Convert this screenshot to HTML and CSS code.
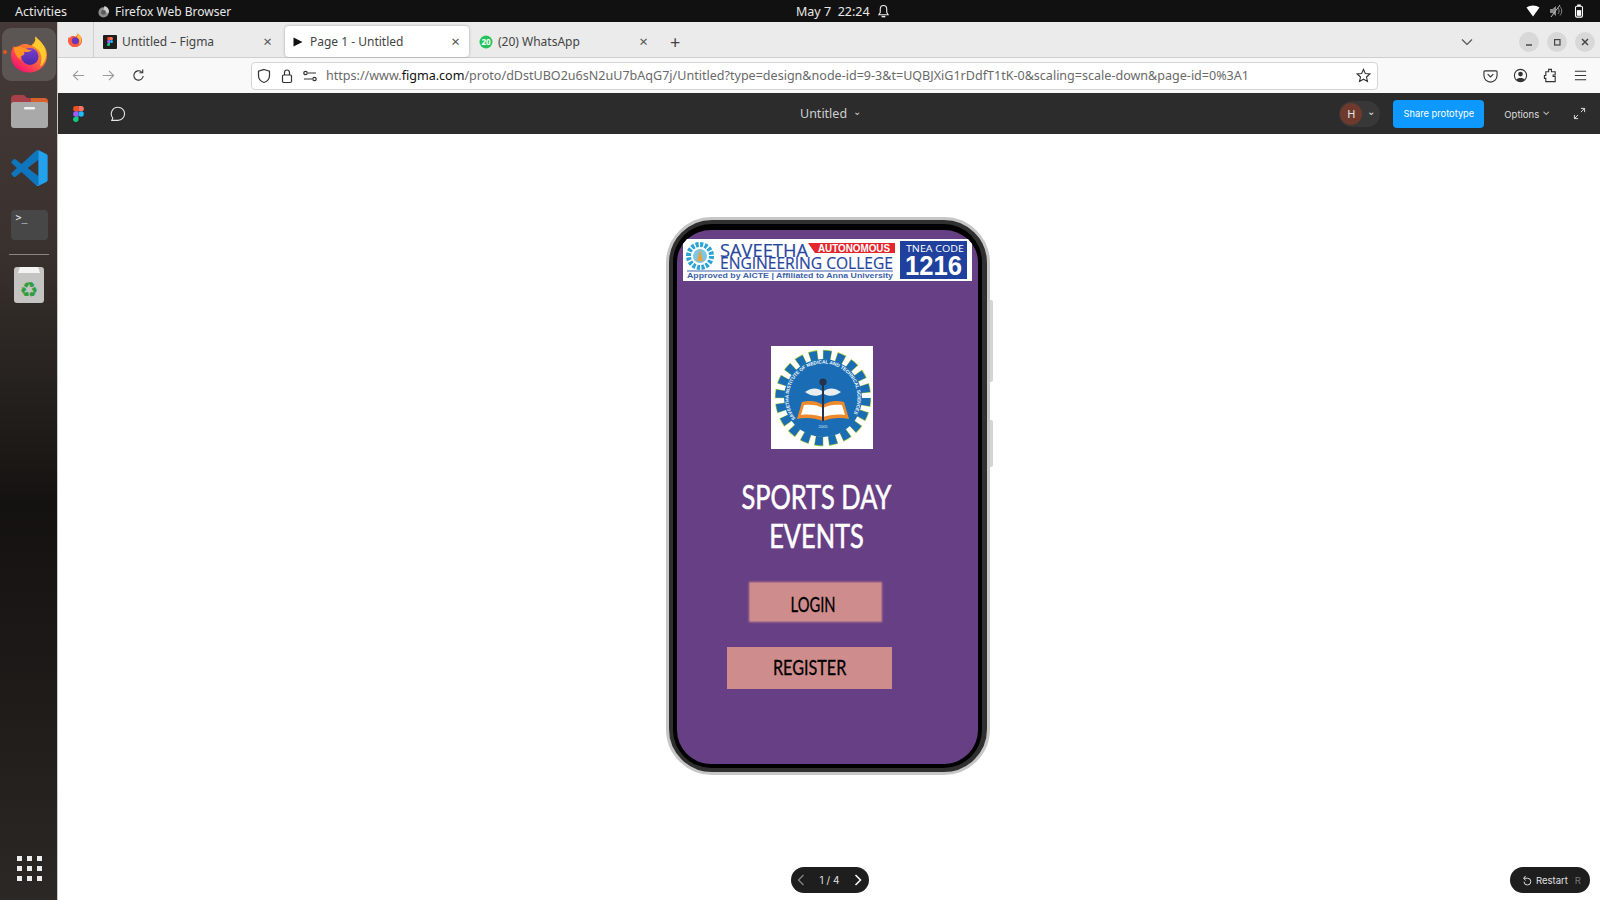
FILE: index.html
```html
<!DOCTYPE html>
<html lang="en">
<head>
    <meta charset="UTF-8">
    <title>Page 1 - Untitled</title>
    <link rel="stylesheet" href="styles.css">
</head>
<body>
    <!-- Ubuntu top bar -->
    <div class="topbar">
        <span class="activities">Activities</span>
        <svg class="app-icon" viewBox="0 0 14 14"><circle cx="7" cy="8" r="5.5" fill="#8d8d8d"/><path d="M8 1c3 1 5 3 5 6 0 1-1 2-2 2L7 5z" fill="#cfcfcf"/><circle cx="7" cy="8" r="2.6" fill="#5a5a5a"/></svg>
        <span class="app-name">Firefox Web Browser</span>
        <span class="clock">May 7&nbsp;&nbsp;22:24</span>
        <svg class="bell" viewBox="0 0 14 16"><path d="M7 1.5c-2.400 0-3.500 1.800-3.500 4v3.500L2 11.500h10L10.500 9V5.500c0-2.200-1.100-4-3.500-4z" fill="none" stroke="#eee" stroke-width="1.200"/><path d="M5 13.500h4" stroke="#eee" stroke-width="1.600"/></svg>
        <div class="tray">
            <svg viewBox="0 0 14 12"><path d="M0.500 2.500C4 -0.300 10 -0.300 13.500 2.500L7 11.500z" fill="#fff"/></svg>
            <svg viewBox="0 0 14 14"><path d="M1 5h2.500L7 2v10L3.500 9H1z" fill="#8a8a8a"/><path d="M9 4c1.500 2 1.500 4 0 6M11 2.500c2.300 3 2.300 6 0 9" fill="none" stroke="#8a8a8a"/><path d="M2 13L11 1" stroke="#bbb"/></svg>
            <svg viewBox="0 0 14 16"><rect x="3" y="2.500" width="8" height="12.500" rx="1.500" fill="none" stroke="#fff" stroke-width="1.200"/><rect x="5" y="0.500" width="4" height="2" fill="#fff"/><rect x="4.500" y="7" width="5" height="6.500" fill="#fff"/></svg>
        </div>
    </div>

    <div class="desktop">
        <!-- Dock -->
        <div class="dock">
            <div class="dock-active">
                <span class="running-dot"></span>
                <svg class="dock-firefox" viewBox="0 0 36 36">
                    <defs>
                        <linearGradient id="foxBody" x1="0.800" y1="0.100" x2="0.200" y2="0.900"><stop offset="0" stop-color="#ff9a2e"/><stop offset="0.500" stop-color="#ff6a3a"/><stop offset="1" stop-color="#f5156c"/></linearGradient>
                        <linearGradient id="foxCore" x1="0.500" y1="0" x2="0.500" y2="1"><stop offset="0" stop-color="#7a3fd0"/><stop offset="1" stop-color="#4a2aa5"/></linearGradient>
                    </defs>
                    <path d="M25 0c1 3 3 4 6 7 4 4 5 8 5 12 0 10-8 17-18 17S0 29 0 19c0-4 1-7 3-10 0 2 1 3 2 4 1-3 3-4 6-5 4-1 6 0 9 1 3-3 5-5 5-9z" fill="url(#foxBody)"/>
                    <circle cx="19" cy="20" r="8.500" fill="url(#foxCore)"/>
                    <path d="M3 11c3-2 8-1 11 1 2 1 5 2 7 1-2 3-6 3-8 2 1 2 0 4-2 4-2 1-2 3-1 5-4-3-7-8-7-13z" fill="#ff9420"/>
                    <path d="M24 0c5 4 11 9 11 18 0 6-3 10-6 12 2-5 2-10 0-14-1-3-5-5-8-7 3-2 4-5 3-9z" fill="#ffcb2e"/>
                </svg>
            </div>
            <svg class="dock-files" viewBox="0 0 37 34">
                <path d="M0 5a4 4 0 0 1 4-4h9l3 3h17a4 4 0 0 1 4 4v8H0z" fill="#a8404a"/>
                <path d="M20 4h13a4 4 0 0 1 4 4v4H20z" fill="#d7602c"/>
                <rect y="8" width="37" height="26" rx="3" fill="#a9a9a9"/>
                <rect x="13" y="13" width="11" height="2.500" rx="1" fill="#f2f2f2"/>
            </svg>
            <svg class="dock-code" viewBox="0 0 100 100">
                <path d="M96 11L75 1a6 6 0 0 0-7 1L28 39 11 26a4 4 0 0 0-5 0L1 31a4 4 0 0 0 0 6l14 13L1 63a4 4 0 0 0 0 6l5 5a4 4 0 0 0 5 0l17-13 40 37a6 6 0 0 0 7 1l21-10a6 6 0 0 0 4-6V17a6 6 0 0 0-4-6zM75 27L45 50l30 23z" fill="#0f75bd" fill-rule="evenodd"/>
                <path d="M75 1l21 10a6 6 0 0 1 4 6v66a6 6 0 0 1-4 6L75 99a6 6 0 0 1-7-1c3 2 7 0 7-3z" fill="#24a1ed"/>
            </svg>
            <div class="dock-terminal">&gt;_</div>
            <div class="dock-sep"></div>
            <svg class="dock-trash" viewBox="0 0 30 37">
                <rect y="1" width="30" height="36" rx="3" fill="#c4c4c2"/>
                <path d="M4 7l2-6h18l2 6z" fill="#f4f4f4"/>
                <text x="15" y="31" class="trash-mark">♻</text>
            </svg>
            <div class="dock-apps">
                <i></i><i></i><i></i><i></i><i></i><i></i><i></i><i></i><i></i>
            </div>
        </div>

        <div class="window">
            <!-- Tabs -->
            <div class="tabbar">
                <div class="view-btn">
                    <svg class="favicon" viewBox="0 0 36 36"><path d="M25 0c1 3 3 4 6 7 4 4 5 8 5 12 0 10-8 17-18 17S0 29 0 19c0-4 1-7 3-10 0 2 1 3 2 4 1-3 3-4 6-5 4-1 6 0 9 1 3-3 5-5 5-9z" fill="#ff5a3c"/><circle cx="19" cy="20" r="9" fill="#6a35c0"/><path d="M25 1c4 4 9 8 9 16 0 7-3 11-6 13 2-5 2-10 0-14-1-3-4-4-6-6 3-2 4-5 3-9z" fill="#ffc22e"/></svg>
                </div>
                <div class="tab">
                    <svg class="favicon" viewBox="0 0 14 14"><rect width="14" height="14" rx="1" fill="#1e1e1e"/><path d="M7 2H5.500a1.500 1.500 0 0 0 0 3H7z" fill="#f24e1e"/><path d="M7 2h1.500a1.500 1.500 0 0 1 0 3H7z" fill="#ff7262"/><path d="M7 5H5.500a1.500 1.500 0 0 0 0 3H7z" fill="#a259ff"/><circle cx="8.500" cy="6.500" r="1.500" fill="#1abcfe"/><path d="M7 8H5.500A1.500 1.500 0 1 0 7 9.500z" fill="#0acf83"/></svg>
                    <span class="tab-title">Untitled – Figma</span>
                    <span class="tab-close">×</span>
                </div>
                <div class="tab tab-active">
                    <svg class="favicon" viewBox="0 0 14 14"><path d="M2.500 2.500L11.500 7l-9 4.500z" fill="#111"/></svg>
                    <span class="tab-title">Page 1 - Untitled</span>
                    <span class="tab-close">×</span>
                </div>
                <div class="tab">
                    <svg class="favicon" viewBox="0 0 14 14"><circle cx="7" cy="7" r="6.500" fill="#25c45b"/><text x="7" y="9.500" class="wa-count">20</text></svg>
                    <span class="tab-title">(20) WhatsApp</span>
                    <span class="tab-close">×</span>
                </div>
                <span class="new-tab">+</span>
                <svg class="tabs-list" viewBox="0 0 12 8"><path d="M1 1.500l5 5 5-5" fill="none" stroke="#555" stroke-width="1.200"/></svg>
                <div class="win-btns">
                    <span class="win-btn"><svg viewBox="0 0 10 10"><path d="M2.500 7.500h5" stroke="#444" stroke-width="1.200"/></svg></span>
                    <span class="win-btn"><svg viewBox="0 0 10 10"><rect x="3" y="3" width="4.500" height="4.500" fill="none" stroke="#444"/></svg></span>
                    <span class="win-btn"><svg viewBox="0 0 10 10"><path d="M2.500 2.500l5 5M7.500 2.500l-5 5" stroke="#444" stroke-width="1.200"/></svg></span>
                </div>
            </div>

            <!-- Navigation -->
            <div class="navbar">
                <svg class="nav-icon nav-back" viewBox="0 0 16 16"><path d="M14 8H2.500M7.500 3l-5 5 5 5" class="line-dim"/></svg>
                <svg class="nav-icon nav-fwd" viewBox="0 0 16 16"><path d="M2 8h11.500M8.500 3l5 5-5 5" class="line-dim"/></svg>
                <svg class="nav-icon nav-reload" viewBox="0 0 16 16"><path d="M13 8.500a5 5 0 1 1-1.700-4.300M12.500 1.500v3.500H9" class="line-dark"/></svg>
                <div class="urlbar">
                    <svg class="url-icon" viewBox="0 0 16 16"><path d="M8 1.500l5.500 1.800v4.200c0 3.500-2.500 6-5.500 7-3-1-5.500-3.500-5.500-7V3.300z" class="line-dark"/></svg>
                    <svg class="url-icon" viewBox="0 0 16 16"><rect x="3.500" y="7" width="9" height="7.500" rx="1.200" class="line-dark"/><path d="M5.500 7V4.500a2.500 2.500 0 0 1 5 0V7" class="line-dark"/></svg>
                    <svg class="url-icon" viewBox="0 0 16 16"><path d="M6 5h8M2 11h8" class="line-dark"/><circle cx="3.500" cy="5" r="1.700" class="line-dark"/><circle cx="12.500" cy="11" r="1.700" class="line-dark"/></svg>
                    <span class="url-text">https://www.<b>figma.com</b>/proto/dDstUBO2u6sN2uU7bAqG7j/Untitled?type=design&amp;node-id=9-3&amp;t=UQBJXiG1rDdfT1tK-0&amp;scaling=scale-down&amp;page-id=0%3A1</span>
                    <svg class="url-star" viewBox="0 0 16 16"><path d="M8 1.500l2 4.400 4.700.5-3.500 3.200 1 4.700L8 11.900l-4.200 2.400 1-4.700-3.500-3.200 4.700-.5z" class="line-dark"/></svg>
                </div>
                <div class="nav-tools">
                    <svg class="nav-icon" viewBox="0 0 16 16"><path d="M2 3h12a1 1 0 0 1 1 1v4a7 7 0 0 1-14 0V4a1 1 0 0 1 1-1z" class="line-dark"/><path d="M5 6.500L8 9.500l3-3" class="line-dark"/></svg>
                    <svg class="nav-icon" viewBox="0 0 16 16"><circle cx="8" cy="8" r="6.500" class="line-dark"/><circle cx="8" cy="6.500" r="2.500" fill="#333"/><path d="M3.500 12.500c1-2.500 8-2.500 9 0-2 2.500-7 2.500-9 0z" fill="#333"/></svg>
                    <svg class="nav-icon" viewBox="0 0 16 16"><path d="M6 1.500h3v2.500h4v3.500h-2.200v1.500h2.200V14.500H3V11H1.500V8H3V4h3z" class="line-dark"/></svg>
                    <svg class="nav-icon" viewBox="0 0 16 16"><path d="M2 3.500h12M2 8h12M2 12.500h12" class="line-dark"/></svg>
                </div>
            </div>

            <!-- Figma toolbar -->
            <div class="figbar">
                <svg class="fig-logo" viewBox="0 0 12 18"><path d="M6 0H3a3 3 0 0 0 0 6h3z" fill="#f24e1e"/><path d="M6 0h3a3 3 0 0 1 0 6H6z" fill="#ff7262"/><path d="M6 6H3a3 3 0 0 0 0 6h3z" fill="#a259ff"/><circle cx="9" cy="9" r="3" fill="#1abcfe"/><path d="M6 12H3a3 3 0 1 0 3 3z" fill="#0acf83"/></svg>
                <svg class="fig-comment" viewBox="0 0 16 16"><path d="M8 1.200a6.600 6.600 0 0 1 0 13.200H1.800l1-2.400A6.600 6.600 0 0 1 8 1.200z" fill="none" stroke="#e6e6e6" stroke-width="1.100"/></svg>
                <div class="fig-title">Untitled<span class="fig-caret">⌄</span></div>
                <div class="fig-right">
                    <div class="fig-user"><span class="fig-avatar">H</span><span class="fig-caret">⌄</span></div>
                    <button class="share-btn">Share prototype</button>
                    <span class="fig-options">Options<span class="fig-caret">⌄</span></span>
                    <svg class="fig-expand" viewBox="0 0 14 14"><path d="M8.500 1.500h4v4M12.500 1.500L8.500 5.500M5.500 12.500h-4v-4M1.500 12.500l4-4" fill="none" stroke="#e6e6e6"/></svg>
                </div>
            </div>

            <!-- Prototype canvas -->
            <div class="stage">
                <div class="phone">
                    <span class="side-btn side-btn-top"></span>
                    <span class="side-btn side-btn-low"></span>
                    <div class="screen">
                        <svg class="banner" viewBox="0 0 289 42">
                            <rect width="289" height="42" fill="#fff"/>
                            <circle cx="17" cy="17" r="11.500" fill="#fff" stroke="#2aa3d5" stroke-width="5" stroke-dasharray="3 1.500"/>
                            <circle cx="17" cy="17" r="7" fill="#7cc7e6"/>
                            <path d="M14 22l3-12 3 12z" fill="#e8a13c"/>
                            <text x="37" y="17.500" class="b-name" textLength="88" lengthAdjust="spacingAndGlyphs">SAVEETHA</text>
                            <path d="M125 4h87v10h-80z" fill="#e5262d"/>
                            <text x="135" y="12.500" class="b-auto" textLength="72" lengthAdjust="spacingAndGlyphs">AUTONOMOUS</text>
                            <text x="37" y="30" class="b-college" textLength="173" lengthAdjust="spacingAndGlyphs">ENGINEERING COLLEGE</text>
                            <rect x="4" y="31.500" width="206" height="1" fill="#3f62b0"/>
                            <text x="4" y="39" class="b-small" textLength="206" lengthAdjust="spacingAndGlyphs">Approved by AICTE  |  Affiliated to Anna University</text>
                            <rect x="217" y="2" width="67" height="38" fill="#1f409c"/>
                            <text x="223" y="13" class="b-tnea" textLength="58" lengthAdjust="spacingAndGlyphs">TNEA CODE</text>
                            <text x="222" y="36" class="b-code" textLength="57" lengthAdjust="spacingAndGlyphs">1216</text>
                        </svg>
                        <svg class="seal" viewBox="0 0 102 103">
                            <rect width="102" height="103" fill="#fff"/>
                            <circle cx="52" cy="52" r="43" fill="none" stroke="#b5cf3c" stroke-width="10.500" stroke-dasharray="8.500 5.010" stroke-dashoffset="0.500"/>
                            <circle cx="52" cy="52" r="43" fill="none" stroke="#1a6db5" stroke-width="9" stroke-dasharray="7.500 6.010"/>
                            <circle cx="52" cy="52" r="39" fill="#1a6db5"/>
                            <path id="sealArc" d="M25 73.500A34.500 34.500 0 1 1 79 73.500" fill="none"/>
                            <text class="seal-text"><textPath href="#sealArc" startOffset="1">SAVEETHA INSTITUTE OF MEDICAL AND TECHNICAL SCIENCES</textPath></text>
                            <path d="M34 46c7-5 13-4 17-1v3c-5 3-12 2-17-2zM70 46c-7-5-13-4-17-1v3c5 3 12 2 17-2z" fill="#e9eef2"/>
                            <path d="M26 73l5-17c8-2 15-1 21 3 6-4 13-5 21-3l5 17c-9-2-18-1-26 2-8-3-17-4-26-2z" fill="#ee8a2c"/>
                            <path d="M30 69l3-10c7-1 14 0 19 3 5-3 12-4 19-3l3 10c-8-1-16 0-22 2-6-2-14-3-22-2z" fill="#fff"/>
                            <rect x="51" y="35" width="2" height="40" fill="#24324a"/>
                            <circle cx="52" cy="36" r="3.600" fill="#24324a"/>
                            <text x="52" y="82" class="seal-year">2005</text>
                        </svg>
                        <h1 class="title"><span class="squeeze">SPORTS DAY</span><br><span class="squeeze">EVENTS</span></h1>
                        <a class="cta cta-login"><span class="squeeze">LOGIN</span></a>
                        <a class="cta cta-register"><span class="squeeze">REGISTER</span></a>
                    </div>
                </div>

                <div class="pager">
                    <svg viewBox="0 0 10 14"><path d="M7.500 2L2.500 7l5 5" fill="none" stroke="#8a8a8a" stroke-width="1.200"/></svg>
                    <span>1 / 4</span>
                    <svg viewBox="0 0 10 14"><path d="M2.500 2l5 5-5 5" fill="none" stroke="#fff" stroke-width="1.500"/></svg>
                </div>
                <div class="restart">
                    <svg viewBox="0 0 12 14"><path d="M3 4.500h4a3.700 3.700 0 1 1-3.700 3.800M5 2L3 4.500 5 7" fill="none" stroke="#eee"/></svg>
                    <span>Restart</span>
                    <span class="restart-key">R</span>
                </div>
            </div>
        </div>
    </div>
</body>
</html>
```
FILE: styles.css
```css
* {
    box-sizing: border-box;
}

html, body {
    margin: 0;
    height: 100%;
    overflow: hidden;
}

body {
    font-family: "Noto Sans", sans-serif;
    background: #fff;
    color: #333;
    display: flex;
    flex-direction: column;
    width: 1600px;
    height: 900px;
}

/* top bar */
.topbar {
    height: 22px;
    background: #111;
    color: #e8e8e8;
    font-size: 12.5px;
    display: flex;
    align-items: center;
    position: relative;
    flex: none;
}

.activities {
    margin-left: 15px;
}

.app-icon {
    width: 13px;
    height: 13px;
    margin-left: 30px;
}

.app-name {
    margin-left: 5px;
    font-size: 12px;
}

.clock {
    position: absolute;
    left: 796px;
}

.bell {
    position: absolute;
    left: 877px;
    width: 13px;
    height: 15px;
}

.tray {
    margin-left: auto;
    margin-right: 14px;
    display: flex;
    align-items: center;
    gap: 9px;
}

.tray svg {
    width: 14px;
    height: 14px;
}

/* desktop */
.desktop {
    flex: 1;
    display: flex;
    min-height: 0;
}

.dock {
    width: 58px;
    flex: none;
    background: linear-gradient(to bottom, #453a38 0%, #3a322e 25%, #2a2522 38%, #141210 55%, #1d1a18 75%, #2c2825 100%);
    display: flex;
    flex-direction: column;
    align-items: center;
    padding: 6px 0 19px 1px;
    border-right: 1px solid #c8c8c8;
}

.dock-active {
    width: 54px;
    height: 53px;
    border-radius: 9px;
    background: #5b5553;
    display: flex;
    align-items: center;
    justify-content: center;
    position: relative;
}

.running-dot {
    position: absolute;
    left: 1px;
    top: 22px;
    width: 4px;
    height: 4px;
    border-radius: 50%;
    background: #e95420;
}

.dock-firefox {
    width: 36px;
    height: 37px;
}

.dock-files {
    width: 37px;
    height: 34px;
    margin-top: 13px;
}

.dock-code {
    width: 37px;
    height: 36px;
    margin-top: 22px;
}

.dock-terminal {
    width: 37px;
    height: 30px;
    margin-top: 24px;
    background: #474747;
    border-radius: 4px;
    color: #eee;
    font-family: "DejaVu Sans Mono", monospace;
    font-size: 10px;
    line-height: 15px;
    padding-left: 5px;
}

.dock-sep {
    width: 40px;
    height: 1px;
    background: #8b8682;
    margin-top: 14px;
}

.dock-trash {
    width: 30px;
    height: 37px;
    margin-top: 11px;
}

.trash-mark {
    font-family: "DejaVu Sans", sans-serif;
    font-size: 21px;
    fill: #2f9e41;
    text-anchor: middle;
}

.dock-apps {
    margin-top: auto;
    display: grid;
    grid-template-columns: repeat(3, 5px);
    gap: 5px;
}

.dock-apps i {
    width: 5px;
    height: 5px;
    background: #eee;
}

.window {
    flex: 1;
    display: flex;
    flex-direction: column;
    min-width: 0;
}

/* tab strip */
.tabbar {
    height: 36px;
    background: #ebebeb;
    display: flex;
    align-items: center;
    flex: none;
    padding-top: 4px;
    border-bottom: 1px solid #cfcfcf;
    font-size: 12px;
}

.view-btn {
    width: 36px;
    height: 35px;
    margin-top: -4px;
    padding-right: 2px;
    border-right: 1px solid #cfcfcf;
    display: flex;
    align-items: center;
    justify-content: center;
    margin-right: 3px;
}

.favicon {
    width: 14px;
    height: 14px;
    flex: none;
}

.tab {
    width: 184px;
    height: 31px;
    margin-right: 4px;
    display: flex;
    align-items: center;
    padding: 0 8px 0 6px;
    border-radius: 4px;
    color: #444;
}

.tab-active {
    background: #fff;
    box-shadow: 0 0 3px rgba(0, 0, 0, 0.3);
}

.tab-title {
    margin-left: 5px;
    flex: 1;
    white-space: nowrap;
}

.tab-close {
    font-size: 15px;
    color: #555;
    line-height: 1;
    width: 11px;
    text-align: center;
}

.wa-count {
    font-size: 8px;
    font-weight: bold;
    fill: #fff;
    text-anchor: middle;
}

.new-tab {
    font-size: 18px;
    color: #444;
    margin-left: 9px;
    line-height: 1;
}

.tabs-list {
    width: 12px;
    height: 8px;
    margin-left: auto;
    margin-right: 46px;
}

.win-btns {
    display: flex;
    gap: 8px;
    margin-right: 5px;
}

.win-btn {
    width: 20px;
    height: 20px;
    border-radius: 50%;
    background: #d8d8d8;
    display: flex;
    align-items: center;
    justify-content: center;
}

.win-btn svg {
    width: 12px;
    height: 12px;
}

/* address bar */
.navbar {
    height: 35px;
    background: #f9f9f9;
    display: flex;
    align-items: center;
    flex: none;
}

.nav-icon {
    width: 15px;
    height: 15px;
    flex: none;
}

.nav-back {
    margin-left: 13px;
}

.nav-fwd {
    margin-left: 15px;
}

.nav-reload {
    margin-left: 15px;
}

.line-dim,
.line-dark {
    fill: none;
    stroke-width: 1.200;
}

.line-dim {
    stroke: #9a9a9a;
}

.line-dark {
    stroke: #333;
}

.urlbar {
    width: 1127px;
    height: 28px;
    margin-left: 105px;
    background: #fff;
    border: 1px solid #d4d4d4;
    border-radius: 4px;
    display: flex;
    align-items: center;
    padding-left: 4px;
    gap: 7px;
    position: relative;
}

.url-icon {
    width: 16px;
    height: 16px;
    flex: none;
}

.url-text {
    font-size: 12.55px;
    color: #6a6a6a;
    white-space: nowrap;
    margin-left: 1px;
}

.url-text b {
    font-weight: normal;
    color: #111;
}

.url-star {
    width: 15px;
    height: 15px;
    position: absolute;
    right: 6px;
}

.nav-tools {
    display: flex;
    gap: 15px;
    margin-left: 105px;
}

/* figma toolbar */
.figbar {
    height: 41px;
    background: #2c2c2c;
    color: #e6e6e6;
    display: flex;
    align-items: center;
    position: relative;
    flex: none;
}

.fig-logo {
    width: 11px;
    height: 16px;
    margin-left: 15px;
}

.fig-comment {
    width: 16px;
    height: 16px;
    margin-left: 26px;
}

.fig-title {
    position: absolute;
    left: 742px;
    font-size: 12.5px;
    color: #cfcfcf;
}

.fig-caret {
    font-size: 10px;
    margin-left: 6px;
    position: relative;
    top: -3px;
}

.fig-right {
    margin-left: auto;
    display: flex;
    align-items: center;
}

.fig-user {
    width: 41px;
    height: 26px;
    border-radius: 13px;
    background: #383838;
    display: flex;
    align-items: center;
    padding-left: 1px;
    margin-right: 13px;
}

.fig-user .fig-caret {
    margin-left: 5px;
}

.fig-avatar {
    width: 22px;
    height: 22px;
    border-radius: 50%;
    background: #6e3a2e;
    font-size: 11px;
    text-align: center;
    line-height: 22px;
}

.share-btn {
    width: 91px;
    height: 28px;
    background: #0d99ff;
    color: #fff;
    border: none;
    border-radius: 4px;
    font-family: Inter, sans-serif;
    font-size: 9.300px;
    padding: 0;
}

.fig-options {
    margin-left: 20px;
    font-family: Inter, sans-serif;
    font-size: 9.500px;
    color: #ddd;
}

.fig-options .fig-caret {
    margin-left: 3px;
}

.fig-expand {
    width: 13px;
    height: 13px;
    margin-left: 23px;
    margin-right: 14px;
}

/* canvas */
.stage {
    flex: 1;
    background: #fff;
    position: relative;
    display: flex;
    justify-content: center;
    align-items: flex-start;
    padding-top: 83px;
    padding-right: 2px;
}

.phone {
    width: 324px;
    height: 558px;
    border: 3px solid #c6c6c6;
    border-radius: 46px;
    background: #303030;
    padding: 4px 5px 4px 4px;
    position: relative;
}

.side-btn {
    position: absolute;
    left: 321px;
    width: 3px;
    background: #d4d4d4;
    border-radius: 0 2px 2px 0;
}

.side-btn-top {
    top: 80px;
    height: 82px;
}

.side-btn-low {
    top: 200px;
    height: 47px;
}

.screen {
    height: 544px;
    border: solid #000;
    border-width: 6px 4px 4px 4px;
    border-radius: 38px;
    background: #673f85;
    padding-top: 9px;
    display: flex;
    flex-direction: column;
    align-items: flex-start;
    overflow: hidden;
}

.banner {
    width: 289px;
    height: 42px;
    margin-left: 6px;
    flex: none;
}

.b-name,
.b-college {
    font-family: "Open Sans", sans-serif;
    fill: #27479f;
    stroke: #27479f;
    stroke-width: 0.2px;
}

.b-name {
    font-size: 18px;
}

.b-college {
    font-size: 16px;
}

.b-auto {
    font-family: "Liberation Sans", sans-serif;
    font-size: 10px;
    font-weight: bold;
    fill: #fff;
}

.b-small {
    font-family: "Liberation Sans", sans-serif;
    font-size: 7.500px;
    font-weight: bold;
    fill: #3d5fa8;
}

.b-tnea {
    font-family: "Open Sans", sans-serif;
    font-size: 9.500px;
    fill: #fff;
}

.b-code {
    font-family: "Liberation Sans", sans-serif;
    font-size: 27px;
    font-weight: bold;
    fill: #fff;
}

.seal {
    width: 102px;
    height: 103px;
    margin-top: 65px;
    margin-left: 94px;
    flex: none;
}

.seal-text {
    font-family: "Liberation Sans", sans-serif;
    font-size: 4.700px;
    font-weight: bold;
    fill: #fff;
}

.seal-year {
    font-family: "Liberation Sans", sans-serif;
    font-size: 4px;
    fill: #dfe9f2;
    text-anchor: middle;
}

.squeeze {
    display: inline-block;
    transform: scaleX(0.77);
    white-space: nowrap;
}

.title {
    width: 278px;
    margin: 28px 0 0 0;
    font-family: Lato, sans-serif;
    font-size: 33px;
    font-weight: normal;
    line-height: 39px;
    color: #fff;
    text-align: center;
    -webkit-text-stroke: 0.6px #fff;
}

.cta {
    display: flex;
    align-items: center;
    justify-content: center;
    background: #ce8c8c;
    color: #000;
    font-family: Lato, sans-serif;
    font-size: 21px;
    -webkit-text-stroke: 0.3px #000;
}

.cta-login {
    width: 131px;
    height: 38px;
    margin: 28px 0 0 73px;
    padding: 3px 4px 0 0;
    box-shadow: 0 0 2px 1px #ce8c8c;
}

.cta-login .squeeze {
    transform: scaleX(0.7);
}

.cta-register {
    width: 165px;
    height: 42px;
    margin: 26px 0 0 50px;
    padding-bottom: 3px;
}

.pager,
.restart {
    position: absolute;
    top: 733px;
    height: 26px;
    border-radius: 13px;
    background: #1e1e1e;
    color: #e0e0e0;
    font-family: Inter, sans-serif;
    font-size: 10px;
    display: flex;
    align-items: center;
}

.pager {
    left: 733px;
    width: 78px;
    justify-content: space-between;
    padding: 0 6px 0 5px;
}

.pager svg {
    width: 10px;
    height: 14px;
}

.restart {
    left: 1452px;
    width: 80px;
    padding-left: 11px;
    font-size: 9.500px;
}

.restart svg {
    width: 11px;
    height: 13px;
    margin-right: 4px;
}

.restart-key {
    color: #777;
    margin-left: 7px;
}
```
